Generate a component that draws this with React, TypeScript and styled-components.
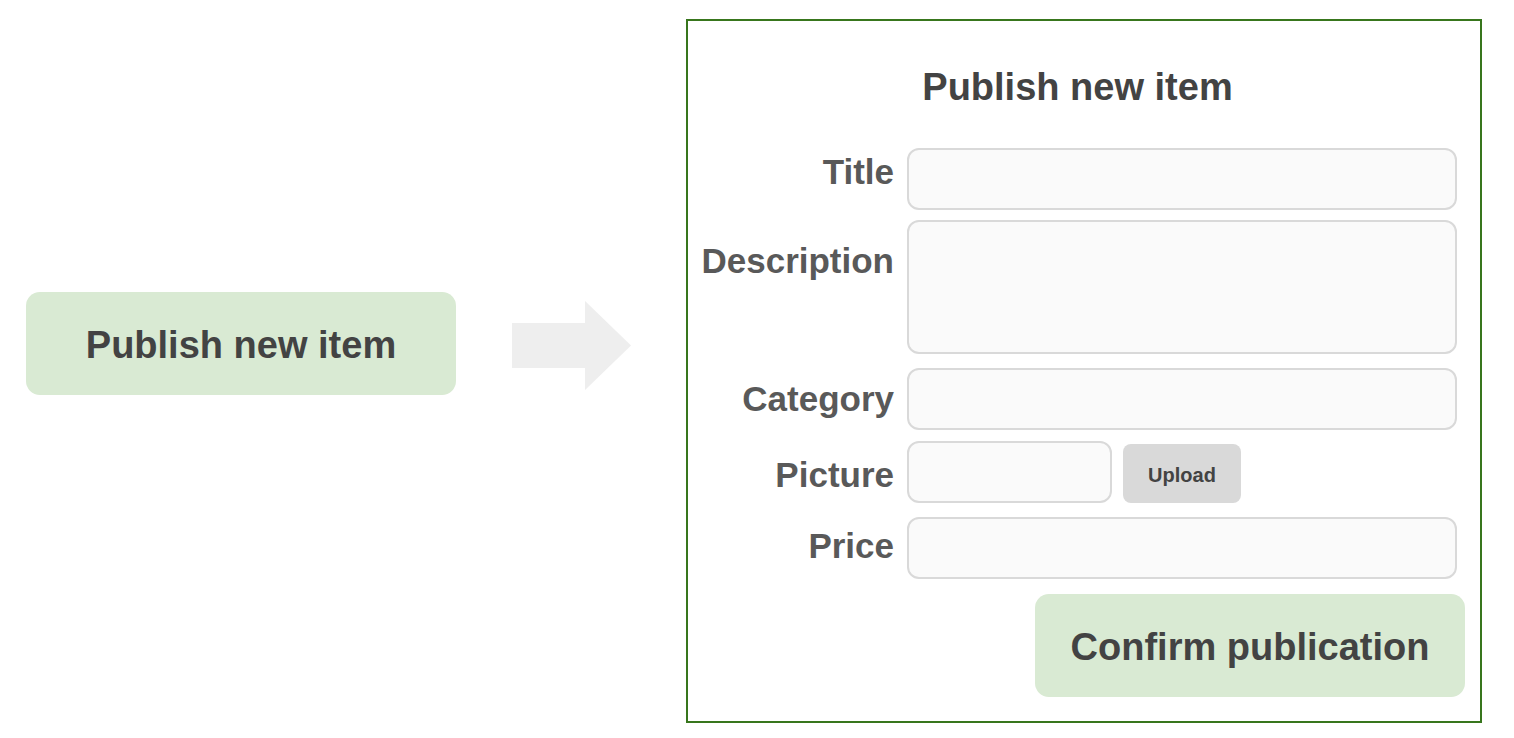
import React from "react";
import styled, { createGlobalStyle } from "styled-components";

const Global = createGlobalStyle`
  html, body { margin: 0; padding: 0; background: #ffffff; }
  body { font-family: "Liberation Sans", Arial, sans-serif; }
`;

const Page = styled.div`
  display: flex;
  align-items: flex-start;
  padding: 19px 0 0 26px;
  width: 1514px;
  height: 738px;
  box-sizing: border-box;
`;

const Left = styled.div`
  display: flex;
  align-items: center;
  margin-top: 273px;
  gap: 56px;
`;

const GreenButton = styled.button<{ $w: number }>`
  display: flex;
  align-items: center;
  justify-content: center;
  width: ${(p) => p.$w}px;
  height: 103px;
  border: none;
  border-radius: 14px;
  background: #d9ead3;
  color: #434343;
  font-family: "Liberation Sans", Arial, sans-serif;
  font-weight: 700;
  font-size: 38px;
  padding: 4px 0 0 0;
`;

const ArrowBox = styled.div`
  width: 119px;
  height: 89px;
  margin-right: 55px;
  display: flex;
  margin-top: 3px;
`;

const Panel = styled.div`
  width: 796px;
  height: 704px;
  box-sizing: border-box;
  border: 2px solid #38761d;
  display: flex;
  flex-direction: column;
  padding: 44px 15px 0 0;
`;

const Heading = styled.h1`
  margin: 0 0 39px 0;
  text-align: center;
  font-size: 38px;
  line-height: 44px;
  font-weight: 700;
  color: #434343;
  padding-left: 2px;
`;

const Row = styled.div<{ $top: number }>`
  display: grid;
  grid-template-columns: 206px 550px;
  column-gap: 13px;
  align-items: center;
  margin-top: ${(p) => p.$top}px;
`;

const Label = styled.label<{ $pt?: number; $pb?: number; $start?: boolean }>`
  text-align: right;
  font-size: 35px;
  line-height: 40px;
  font-weight: 700;
  color: #595959;
  padding-top: ${(p) => p.$pt ?? 0}px;
  padding-bottom: ${(p) => p.$pb ?? 0}px;
  align-self: ${(p) => (p.$start ? "start" : "center")};
`;

const Field = styled.div<{ $h: number; $w?: number }>`
  box-sizing: border-box;
  height: ${(p) => p.$h}px;
  width: ${(p) => (p.$w ? `${p.$w}px` : "100%")};
  background: #fafafa;
  border: 2px solid #d9d9d9;
  border-radius: 12px;
`;

const PicWrap = styled.div`
  display: flex;
  align-items: flex-end;
  gap: 11px;
`;

const UploadButton = styled.button`
  width: 118px;
  height: 59px;
  border: none;
  border-radius: 8px;
  background: #d9d9d9;
  color: #434343;
  font-family: "Liberation Sans", Arial, sans-serif;
  font-weight: 700;
  font-size: 20px;
  padding: 4px 0 0 0;
`;

const Footer = styled.div`
  display: flex;
  justify-content: flex-end;
  margin-top: 15px;
`;

const Arrow = () => (
  <svg width="119" height="89" viewBox="0 0 119 89">
    <polygon points="0,22 73,22 73,0 119,44.5 73,89 73,67 0,67" fill="#eeeeee" />
  </svg>
);

export default function App() {
  return (
    <>
      <Global />
      <Page>
        <Left>
          <GreenButton $w={430}>Publish new item</GreenButton>
          <ArrowBox>
            <Arrow />
          </ArrowBox>
        </Left>
        <Panel>
          <Heading>Publish new item</Heading>
          <Row $top={0}>
            <Label $pb={14}>Title</Label>
            <Field $h={62} />
          </Row>
          <Row $top={10}>
            <Label $start $pt={21}>Description</Label>
            <Field $h={134} />
          </Row>
          <Row $top={14}>
            <Label>Category</Label>
            <Field $h={62} />
          </Row>
          <Row $top={11}>
            <Label $pt={6}>Picture</Label>
            <PicWrap>
              <Field $h={62} $w={205} />
              <UploadButton>Upload</UploadButton>
            </PicWrap>
          </Row>
          <Row $top={14}>
            <Label $pb={4}>Price</Label>
            <Field $h={62} />
          </Row>
          <Footer>
            <GreenButton $w={430}>Confirm publication</GreenButton>
          </Footer>
        </Panel>
      </Page>
    </>
  );
}
